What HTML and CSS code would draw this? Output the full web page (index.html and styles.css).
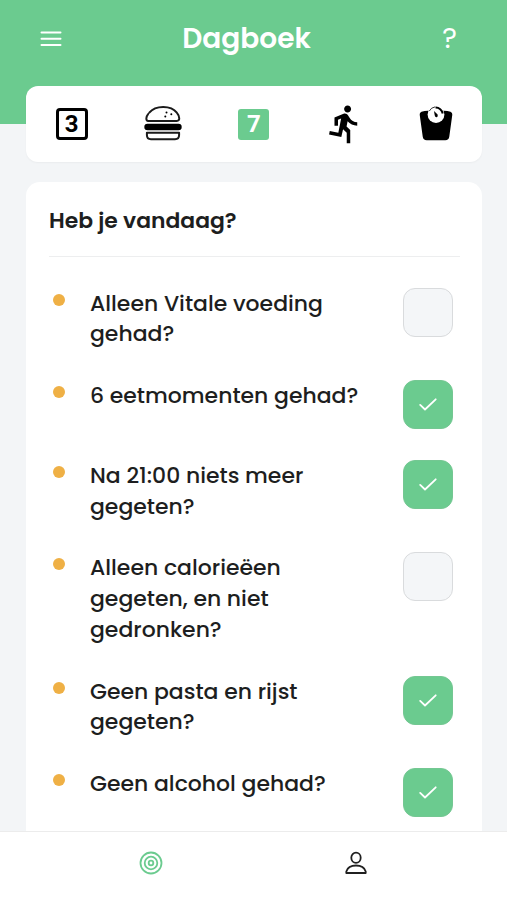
FILE: index.html
```html
<!DOCTYPE html>
<html lang="nl">
<head>
<meta charset="utf-8">
<title>Dagboek</title>
<link rel="stylesheet" href="styles.css">
</head>
<body>
<div class="app">
  <header class="header">
    <svg class="menu" viewBox="0 0 22 16"><path d="M1.500 1.500h19M1.500 7.800h19M1.500 14h19"/></svg>
    <h1 class="title">Dagboek</h1>
    <span class="help">?</span>
  </header>
  <nav class="tabs">
    <span class="tab"><span class="num">3</span></span>
    <span class="tab">
      <svg class="icon" viewBox="0 0 42 42">
        <path class="line" d="M6.200 17.900C3.300 17.900 4.200 13.400 6.100 11.100M7.300 9.700C13.500 2 29 2 34.800 9.700C37.800 13.400 38.300 17.900 34.800 17.900H6.200"/>
        <rect x="2.300" y="20.800" width="37.400" height="6.400" rx="3.200"/>
        <path class="line" d="M4.900 29.800H37.100V32Q37.100 36.200 33 36.200H9Q4.900 36.200 4.900 32Z"/>
        <circle cx="24.500" cy="9.500" r="1"/><circle cx="29.300" cy="11.200" r="1"/><circle cx="23.300" cy="13.500" r="1"/>
      </svg>
    </span>
    <span class="tab"><span class="num num-active">7</span></span>
    <span class="tab">
      <svg class="icon" viewBox="0 0 24 24"><path d="M13.490 5.480c1.100 0 2-.9 2-2s-.9-2-2-2-2 .9-2 2 .9 2 2 2zm-3.600 13.900l1-4.400 2.100 2v6h2v-7.500l-2.100-2 .6-3c1.300 1.500 3.300 2.500 5.500 2.500v-2c-1.900 0-3.500-1-4.300-2.400l-1-1.600c-.4-.6-1-1-1.700-1-.3 0-.5.1-.8.1l-5.200 2.200v4.700h2v-3.400l1.800-.7-1.600 8.100-4.900-1-.4 2 7 1.400z"/></svg>
    </span>
    <span class="tab">
      <svg class="icon" viewBox="0 0 42 42">
        <path d="M4.700 11.800Q4.400 9.600 6.500 8.800Q9.500 7.800 13 7.700H29Q32.500 7.800 35.500 8.800Q37.600 9.600 37.300 11.800L34.300 33.500Q33.800 37.300 30.300 37.300H11.700Q8.200 37.300 7.700 33.500Z"/>
        <circle class="dial" cx="21" cy="11.500" r="8.400"/>
        <path class="ring" d="M14.300 8A7.800 7.800 0 0 1 20 3.900"/>
        <path class="arc" d="M20.500 4.600A7 7 0 0 1 27.700 10.500"/>
        <path d="M19 8L22.600 11.500Q23.300 13.800 21.800 14.300Q20 14.500 19.700 12.300Z"/>
      </svg>
    </span>
  </nav>
  <main class="card">
    <h2 class="heading">Heb je vandaag?</h2>
    <ul class="list">
      <li class="row"><i class="dot"></i><p class="text">Alleen Vitale voeding<br>gehad?</p><span class="box"></span></li>
      <li class="row"><i class="dot"></i><p class="text">6 eetmomenten gehad?</p><span class="box on"><svg viewBox="0 0 18 13"><path d="M1.200 6.900L6 11.500L16.700 1.300"/></svg></span></li>
      <li class="row"><i class="dot"></i><p class="text">Na 21:00 niets meer<br>gegeten?</p><span class="box on"><svg viewBox="0 0 18 13"><path d="M1.200 6.900L6 11.500L16.700 1.300"/></svg></span></li>
      <li class="row"><i class="dot"></i><p class="text">Alleen calorieëen<br>gegeten, en niet<br>gedronken?</p><span class="box"></span></li>
      <li class="row"><i class="dot"></i><p class="text">Geen pasta en rijst<br>gegeten?</p><span class="box on"><svg viewBox="0 0 18 13"><path d="M1.200 6.900L6 11.500L16.700 1.300"/></svg></span></li>
      <li class="row"><i class="dot"></i><p class="text">Geen alcohol gehad?</p><span class="box on"><svg viewBox="0 0 18 13"><path d="M1.200 6.900L6 11.500L16.700 1.300"/></svg></span></li>
    </ul>
  </main>
  <footer class="bottom">
    <svg class="target" viewBox="0 0 24 24"><circle cx="12" cy="12" r="10.500"/><circle cx="12" cy="12" r="6.300"/><circle cx="12" cy="12" r="2.300"/></svg>
    <svg class="user" viewBox="0 0 22 24"><ellipse cx="11" cy="6.700" rx="4.700" ry="5.100"/><path d="M1.300 22V20.500C2.600 16.300 6.200 14.500 11 14.500S19.400 16.300 20.700 20.500V22Z"/></svg>
  </footer>
</div>
</body>
</html>
```
FILE: styles.css
```css
* { box-sizing: border-box; }
body { margin: 0; font-family: Poppins, Inter, sans-serif; color: #1d1e20; background: #f3f5f7; }
.app { height: 900px; overflow: hidden; display: flex; flex-direction: column; background: linear-gradient(#6bcb8f 124px, #f3f5f7 124px); }
.header { flex: none; height: 86px; padding: 0 40px 8px; display: grid; grid-template-columns: 22px 1fr 22px; align-items: center; color: #fff; }
.menu { width: 22px; height: 16px; fill: none; stroke: #fff; stroke-width: 2; stroke-linecap: round; }
.title { margin: 0 14px 0 0; font-size: 28px; font-weight: 600; line-height: 40px; text-align: center; }
.help { margin: 0 3px 0 -10px; font-size: 28px; font-weight: 400; line-height: 40px; text-align: center; }
.tabs { flex: none; height: 76px; margin: 0 25px 0 26px; display: grid; grid-template-columns: repeat(5, 1fr); border-radius: 12px; background: #fff; box-shadow: 0 1px 2px #0000000a; }
.tab { display: flex; align-items: center; justify-content: center; }
.icon { width: 42px; height: 42px; margin-top: -1px; }
.line { fill: none; stroke: #1a1a1a; stroke-width: 2; stroke-linecap: round; stroke-linejoin: round; }
.dial { fill: #fff; }
.ring { fill: none; stroke: #000; stroke-width: .8; }
.arc { fill: none; stroke: #000; stroke-width: 2; }
.num { width: 32px; height: 32px; display: flex; align-items: center; justify-content: center; border: 3px solid #000; border-radius: 4px; font: 700 24px/28px Roboto, sans-serif; color: #000; }
.num-active { width: 31px; height: 31px; border: 0; border-radius: 3px; background: #6bcb8f; color: #fff; }
.card { flex: 1; min-height: 0; overflow: hidden; margin: 20px 25px 0 26px; padding: 0 22px 0 23px; border-radius: 14px 14px 0 0; background: #fff; }
.heading { margin: 0; height: 75px; border-bottom: 1px solid #edeeef; font-size: 21.900px; font-weight: 600; line-height: 77px; }
.list { margin: 0; padding: 30.500px 7px 0 3.500px; list-style: none; display: flex; flex-direction: column; gap: 30.800px; }
.row { display: flex; align-items: flex-start; }
.dot { flex: none; width: 12px; height: 12px; margin-top: 6.200px; border-radius: 50%; background: #efb045; }
.text { flex: 1; margin: 1px 0 -1px 25.500px; font-size: 21.950px; font-weight: 500; line-height: 30.850px; white-space: nowrap; }
.box { flex: none; width: 50px; height: 49px; display: flex; align-items: center; justify-content: center; border: 1px solid #d9dbdd; border-radius: 12px; background: #f4f6f8; }
.on { border-color: #74c792; background: #6bcb8f; }
.box svg { width: 18px; height: 13px; fill: none; stroke: #fff; stroke-width: 1.800; stroke-linecap: round; stroke-linejoin: round; }
.bottom { flex: none; height: 69px; padding: 0 140px 0 139px; display: flex; justify-content: space-between; align-items: flex-start; border-top: 1px solid #ececec; background: #fff; }
.target { width: 24px; height: 24px; margin-top: 19px; fill: none; stroke: #6bcb8f; stroke-width: 1.800; }
.user { width: 22px; height: 24px; margin-top: 19px; fill: none; stroke: #202020; stroke-width: 1.800; stroke-linejoin: round; }
```
